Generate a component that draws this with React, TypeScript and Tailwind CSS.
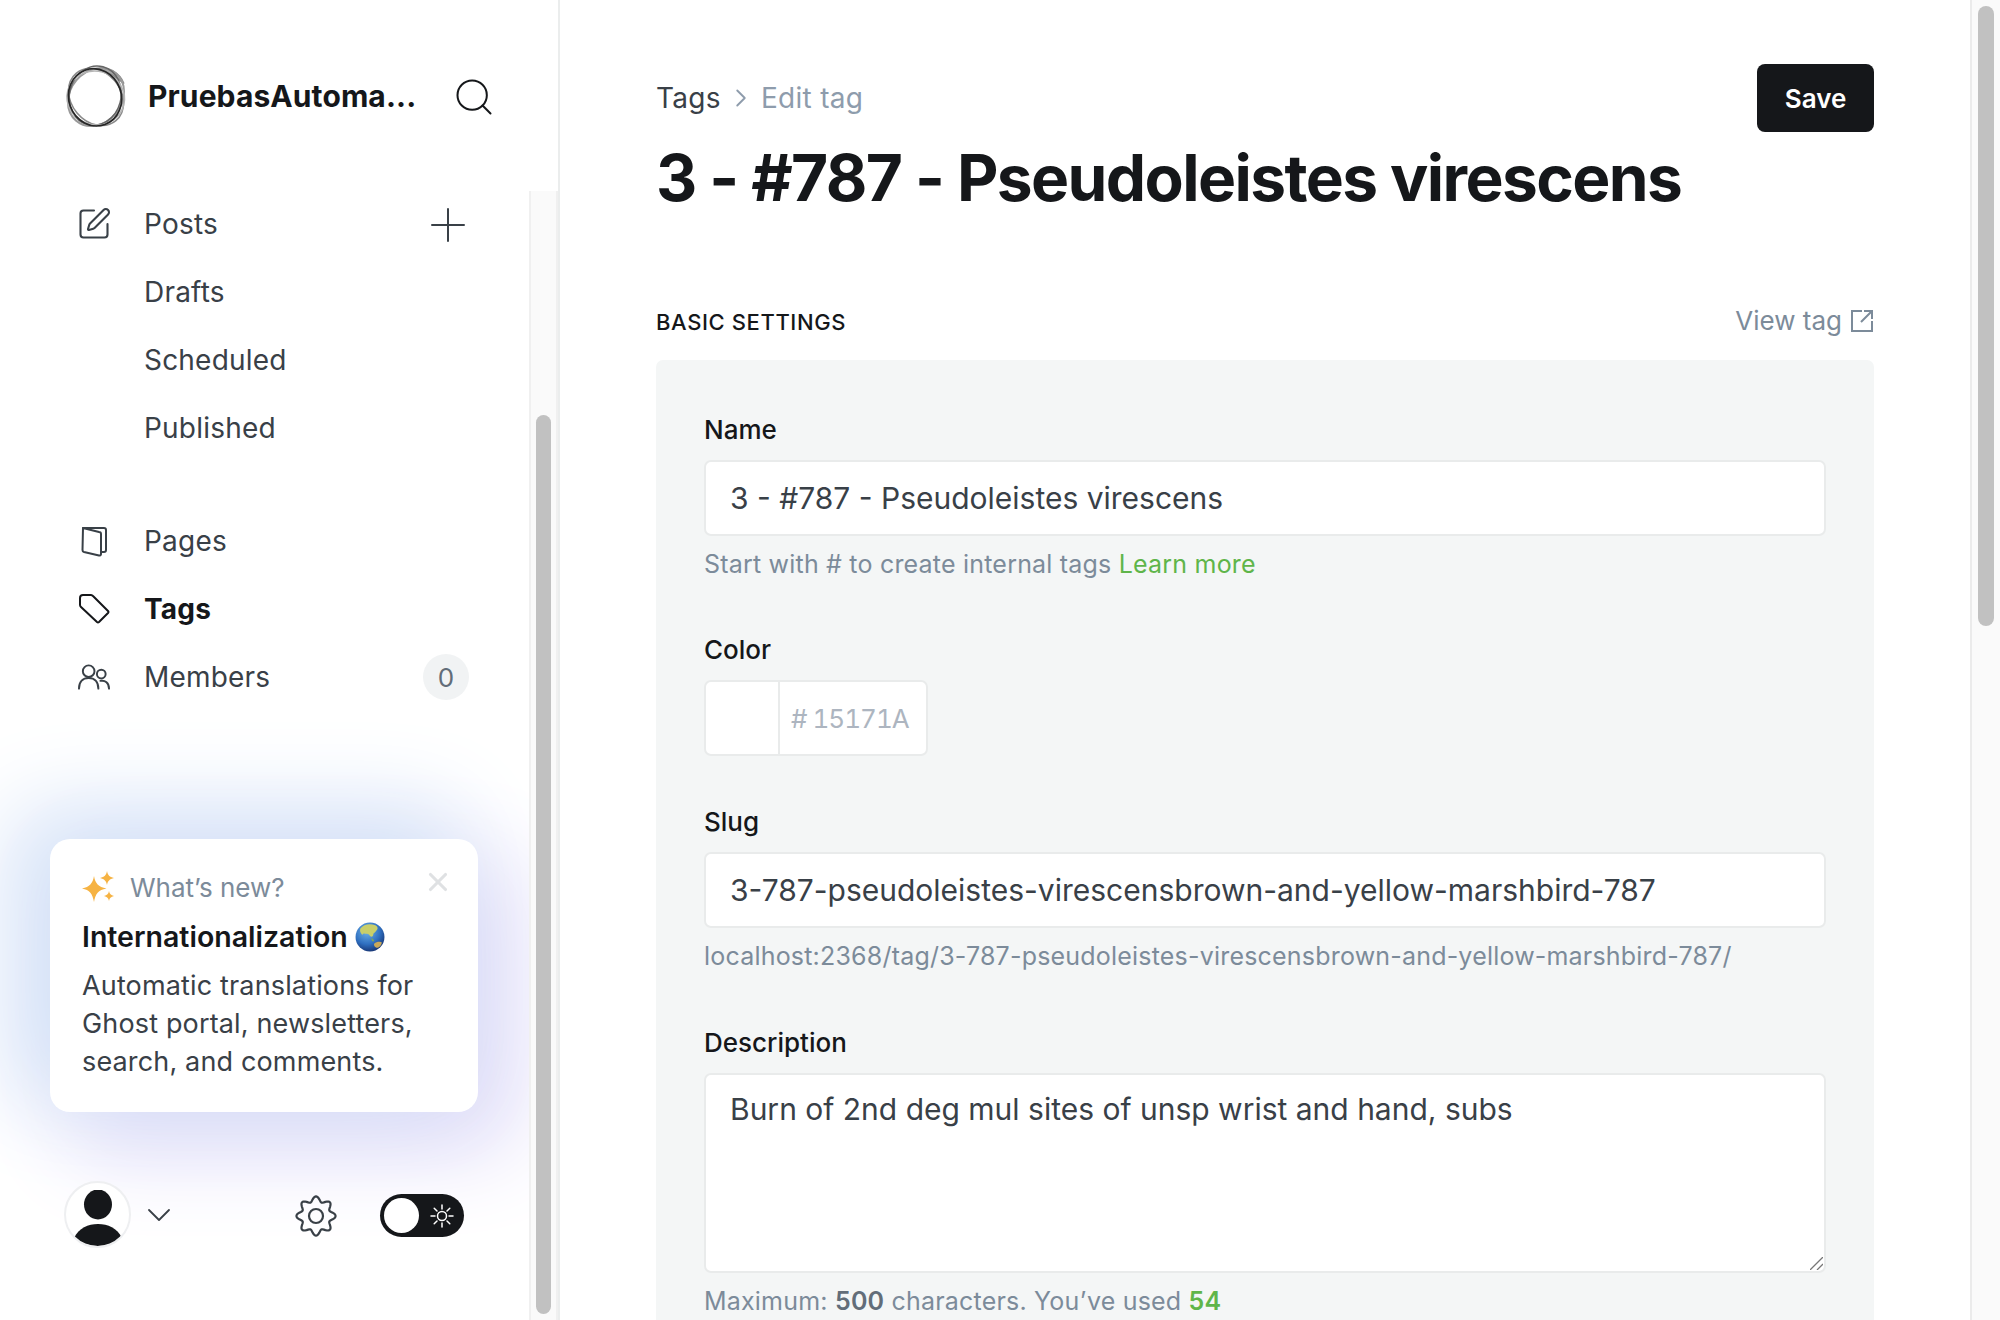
import React from 'react';
import { Search, SquarePen, ChevronDown, ChevronRight, X } from 'lucide-react';

const NavRow: React.FC<{ label: string; icon?: React.ReactNode; active?: boolean; right?: React.ReactNode }> = ({ label, icon, active, right }) => (
  <div className="flex h-[68px] items-center pl-[78px] pr-[60px]">
    <div className="mr-[34px] flex w-[32px] shrink-0 items-center justify-center">{icon}</div>
    <span className={active ? 'flex-1 text-[28px] font-bold tracking-[0.2px] text-[#15171a]' : 'flex-1 text-[28px] tracking-[0.2px] text-[#394047]'}>{label}</span>
    {right}
  </div>
);

const Logo = () => (
  <svg width="66" height="66" viewBox="0 0 64 64" fill="none" className="shrink-0">
    <path d="M34 5c8-3 21 3 25 14-7-7-15-11-25-14z" fill="#a8a8a8" stroke="#8a8a8a" strokeWidth="1.500" />
    <ellipse cx="32" cy="32" rx="30" ry="24" stroke="#8a8a8a" strokeWidth="1.500" transform="rotate(50 32 32)" />
    <ellipse cx="32" cy="32" rx="30" ry="25" stroke="#9a9a9a" strokeWidth="2" transform="rotate(130 32 32)" />
    <ellipse cx="31" cy="33" rx="29" ry="25" stroke="#666" strokeWidth="1.500" transform="rotate(105 32 32)" />
    <ellipse cx="32" cy="33" rx="28" ry="26" stroke="#b5b5b5" strokeWidth="1.500" transform="rotate(15 32 32)" />
    <ellipse cx="32" cy="33" rx="28" ry="25.500" stroke="#262626" strokeWidth="1.600" transform="rotate(70 32 32)" />
  </svg>
);

const PlusIcon = () => (
  <svg width="34" height="34" viewBox="0 0 34 34" stroke="#394047" strokeWidth="2" strokeLinecap="round" className="mr-[4px] mt-[2px]">
    <path d="M17 1v32M1 17h32" />
  </svg>
);

const PagesIcon = () => (
  <svg width="28" height="32" viewBox="0 0 28 32" fill="none" stroke="#394047" strokeWidth="2" strokeLinejoin="round" strokeLinecap="round">
    <path d="M3 3h21a2 2 0 0 1 2 2v20a2 2 0 0 1-2 2h-3" />
    <path d="M3 3l16 4a2 2 0 0 1 2 2v20a1.500 1.500 0 0 1-2 1.500L4 27a2 2 0 0 1-1.500-2z" />
  </svg>
);

const TagIcon = () => (
  <svg width="32" height="32" viewBox="0 0 32 32" fill="none" stroke="#15171a" strokeWidth="2" strokeLinejoin="round">
    <path d="M2 5a3 3 0 0 1 3-3h8a3 3 0 0 1 2 1l15 15a1.500 1.500 0 0 1 0 2l-9 9a1.500 1.500 0 0 1-2 0L3 14a3 3 0 0 1-1-2z" />
  </svg>
);

const MembersIcon = () => (
  <svg width="33" height="28" viewBox="0 0 33 28" fill="none" stroke="#394047" strokeWidth="2" strokeLinecap="round">
    <circle cx="11" cy="8" r="6" />
    <path d="M1 26c0-7 4-11 10-11s10 4 10 11" />
    <circle cx="24" cy="11" r="4.500" />
    <path d="M23 18c5-1 9 2 9 8" />
  </svg>
);

const Sparkles = () => (
  <svg width="33" height="32" viewBox="0 0 33 32" fill="#f6b343" className="shrink-0">
    <path d="M12 5c1.400 7.500 4.200 11 12.500 12.500C16.200 19 13.400 23 12 31c-1.400-8-4.200-12-12-13.500C7.800 16 10.600 12.500 12 5z" />
    <path d="M25 0c.8 4 2.500 6 7 7-4.500 1-6.200 3-7 7-.8-4-2.500-6-7-7 4.500-1 6.200-3 7-7z" />
    <path d="M27 20c.6 3 1.800 4.300 5 5-3.200.7-4.400 2-5 5-.6-3-1.800-4.300-5-5 3.200-.7 4.400-2 5-5z" />
  </svg>
);

const Globe = () => (
  <svg width="30" height="30" viewBox="0 0 28 28">
    <defs>
      <radialGradient id="sea" cx="40%" cy="30%" r="75%">
        <stop offset="0%" stopColor="#6fb4e8" />
        <stop offset="60%" stopColor="#2f6fc0" />
        <stop offset="100%" stopColor="#15306e" />
      </radialGradient>
    </defs>
    <circle cx="14" cy="14" r="13.500" fill="url(#sea)" />
    <path d="M5 6c3-4 9-5 14-3 2 1 3 3 1 5-1 2-3 2-3 4s-2 2-3 1-1-2-3-2-3-1-4 1c-1-1-3-3-2-6z" fill="#c9cf6a" />
    <path d="M15 15l2 1 1 2-2 0z" fill="#7fa655" />
    <path d="M18 20c2-2 6-2 7-1 0 2-2 5-4 5s-4-2-3-4z" fill="#c8a85a" />
  </svg>
);

const Avatar = () => (
  <div className="flex h-[67px] w-[67px] items-end justify-center overflow-hidden rounded-full border-2 border-[#eeeff1] bg-white">
    <svg width="52" height="56" viewBox="0 0 52 56" fill="#15171a">
      <ellipse cx="26" cy="14.500" rx="14" ry="15" />
      <path d="M2 48c5-10 14-14 24-14s19 4 24 14c-6 5-15 8-24 8S8 53 2 48z" />
    </svg>
  </div>
);

// wavy outline, 8 teeth
const gearPath = Array.from({ length: 96 }, (_, i) => {
  const a = (i / 96) * Math.PI * 2;
  const r = 17 + 2.6 * Math.cos(8 * a);
  return `${i === 0 ? 'M' : 'L'}${(21 + r * Math.sin(a)).toFixed(2)} ${(21 - r * Math.cos(a)).toFixed(2)}`;
}).join('') + 'Z';

const Gear = () => (
  <svg width="42" height="42" viewBox="0 0 42 42" fill="none" stroke="#394047" strokeWidth="2.200" strokeLinejoin="round">
    <path d={gearPath} />
    <circle cx="21" cy="21" r="7" />
  </svg>
);

const SunIcon = () => (
  <svg width="24" height="24" viewBox="0 0 24 24" fill="none" stroke="#ffffff" strokeWidth="1.500" strokeLinecap="round">
    <circle cx="12" cy="12" r="4.500" />
    <path d="M12 1v4M12 19v4M1 12h4M19 12h4M4.200 4.200l2.800 2.800M17 17l2.800 2.800M4.200 19.800L7 17M17 7l2.800-2.800" />
  </svg>
);

const Toggle = () => (
  <div className="flex h-[43px] w-[84px] items-center justify-between rounded-full bg-[#15171a] pl-[4px] pr-[10px]">
    <div className="h-[35px] w-[35px] rounded-full bg-white" />
    <SunIcon />
  </div>
);

const Field: React.FC<{ label: string; className?: string; children: React.ReactNode }> = ({ label, className, children }) => (
  <div className={className}>
    <div className="mb-[14px] text-[26px] leading-[32px] font-medium text-[#15171a]">{label}</div>
    {children}
  </div>
);

const inputClass = 'flex h-[76px] items-center rounded-[7px] border-2 border-[#e9ebeb] bg-white px-[24px] text-[30px] text-[#394047]';
const hintClass = 'mt-[12px] text-[25px] leading-[32px] tracking-[0.2px] text-[#7c8b9a]';

export default function App() {
  return (
    <div className="flex h-[1320px] w-[2000px] overflow-hidden bg-white font-['Inter',sans-serif]">
      {/* Sidebar */}
      <aside className="flex h-full w-[560px] shrink-0 flex-col border-r-2 border-[#ebeded]">
        <div className="flex h-[191px] shrink-0 items-center pl-[63px] pr-[62px] pt-[2px]">
          <Logo />
          <span className="ml-[19px] flex-1 truncate text-[30px] font-bold tracking-[0.1px] text-[#15171a]">PruebasAutoma...</span>
          <Search size={44} color="#15171a" strokeWidth={1.100} />
        </div>
        <div className="flex min-h-0 flex-1">
          <div className="relative flex min-w-0 flex-1 flex-col overflow-hidden">
            <nav className="-mt-[1px]">
              <NavRow label="Posts" icon={<SquarePen size={36} color="#394047" strokeWidth={1.400} className="shrink-0" />} right={<PlusIcon />} />
              <NavRow label="Drafts" />
              <NavRow label="Scheduled" />
              <NavRow label="Published" />
            </nav>
            <nav className="mt-[45px]">
              <NavRow label="Pages" icon={<PagesIcon />} />
              <NavRow label="Tags" active icon={<TagIcon />} />
              <NavRow
                label="Members"
                icon={<MembersIcon />}
                right={<span className="flex h-[46px] w-[46px] items-center justify-center rounded-full bg-[#f1f3f4] text-[26px] text-[#626d79]">0</span>}
              />
            </nav>

            {/* What's new card */}
            <div className="relative ml-[50px] mt-[128px] h-[273px] w-[428px] rounded-[20px] bg-white px-[32px] pt-[29px] shadow-[-30px_-20px_90px_10px_#d4e2f7,30px_30px_90px_10px_#e0dbf8]">
              <X size={30} color="#dfe1e3" strokeWidth={2.500} className="absolute right-[25px] top-[28px]" />
              <div className="flex h-[38px] items-center">
                <Sparkles />
                <span className="ml-[15px] text-[26px] text-[#7c8b9a]">What&rsquo;s new?</span>
              </div>
              <div className="mt-[10px] flex items-center text-[28.500px] font-semibold text-[#15171a]">
                Internationalization
                <span className="ml-[7px]"><Globe /></span>
              </div>
              <p className="mt-[8px] text-[27px] leading-[38px] tracking-[0.150px] text-[#394047]">
                Automatic translations for Ghost portal, newsletters, search, and comments.
              </p>
            </div>

            <div className="relative mt-[69px] flex items-center pl-[64px]">
              <Avatar />
              <ChevronDown size={40} color="#394047" strokeWidth={1.100} className="ml-[8px]" />
              <div className="ml-[116px] mt-[2px]"><Gear /></div>
              <div className="ml-[43px] mt-[2px]"><Toggle /></div>
            </div>
          </div>

          {/* Sidebar scrollbar */}
          <div className="z-10 flex w-[29px] shrink-0 flex-col border-x-2 border-x-[#f0f0f0] bg-[#fafafa] px-[5px] pt-[224px] pb-[6px]">
            <div className="flex-1 rounded-full bg-[#c1c1c1]" />
          </div>
        </div>
      </aside>

      {/* Main */}
      <main className="min-w-0 flex-1 overflow-hidden pl-[96px] pr-[96px]">
        <div className="flex items-start justify-between pt-[64px]">
          <div className="flex h-[68px] items-center text-[28px] tracking-[0.3px]">
            <span className="text-[#394047]">Tags</span>
            <ChevronRight size={30} color="#8e9cac" strokeWidth={1.500} className="mx-[5px]" />
            <span className="text-[#8e9cac]">Edit tag</span>
          </div>
          <button className="h-[68px] w-[117px] rounded-[8px] bg-[#15171a] text-[26px] font-semibold text-white">Save</button>
        </div>
        <h1 className="mt-[8px] text-[64px] leading-[76px] font-bold tracking-[-1.6px] text-[#15171a]">3 - #787 - Pseudoleistes virescens</h1>

        <div className="mt-[87px] flex h-[39px] items-center justify-between">
          <span className="text-[22px] font-medium tracking-[0.6px] text-[#15171a]">BASIC SETTINGS</span>
          <span className="flex items-center pb-[4px] text-[26px] text-[#7c8b9a]">
            View tag
            <svg className="ml-[8px]" width="24" height="24" viewBox="0 0 24 24" fill="none" stroke="#7c8b9a" strokeWidth="2">
              <path d="M12 2H2v20h20V12M14 2h8v8M22 2L11 13" />
            </svg>
          </span>
        </div>

        <section className="mt-[18px] rounded-t-[7px] bg-[#f4f6f6] px-[48px] pb-[60px] pt-[54px]">
          <Field label="Name">
            <div className={inputClass}>3 - #787 - Pseudoleistes virescens</div>
            <p className={hintClass}>
              Start with # to create internal tags <span className="text-[#5fb54a]">Learn more</span>
            </p>
          </Field>
          <Field label="Color" className="mt-[54px]">
            <div className="flex h-[76px] w-[224px] overflow-hidden rounded-[7px] border-2 border-[#e9ebeb] bg-white">
              <div className="w-[74px] border-r-2 border-[#e9ebeb]" />
              <span className="flex flex-1 items-center pl-[11px] text-[26px] tracking-[-1px] tabular-nums text-[#adb5c0]">#&nbsp;15171A</span>
            </div>
          </Field>
          <Field label="Slug" className="mt-[50px]">
            <div className={inputClass}>3-787-pseudoleistes-virescensbrown-and-yellow-marshbird-787</div>
            <p className={hintClass}>localhost:2368/tag/3-787-pseudoleistes-virescensbrown-and-yellow-marshbird-787/</p>
          </Field>
          <Field label="Description" className="mt-[55px]">
            <div className="relative">
              <textarea
                readOnly
                className="block h-[200px] w-full resize-none rounded-[7px] border-2 border-[#e9ebeb] bg-white px-[24px] py-[12px] text-[30px] text-[#394047]"
                defaultValue="Burn of 2nd deg mul sites of unsp wrist and hand, subs"
              />
              <svg className="absolute bottom-[3px] right-[3px]" width="13" height="13" viewBox="0 0 13 13" stroke="#777777" strokeWidth="1.300">
                <path d="M0 13L13 0M7 13l6-6" />
              </svg>
            </div>
            <p className={hintClass}>
              Maximum: <b className="font-semibold text-[#626d79]">500</b> characters. You&rsquo;ve used <b className="font-semibold text-[#5fb54a]">54</b>
            </p>
          </Field>
        </section>
      </main>

      {/* Page scrollbar */}
      <div className="flex w-[30px] shrink-0 border-l-2 border-[#ebebeb] bg-[#fafafa] pl-[6px] pr-[6px] pt-[6px]">
        <div className="h-[620px] w-full rounded-full bg-[#c1c1c1]" />
      </div>
    </div>
  );
}
